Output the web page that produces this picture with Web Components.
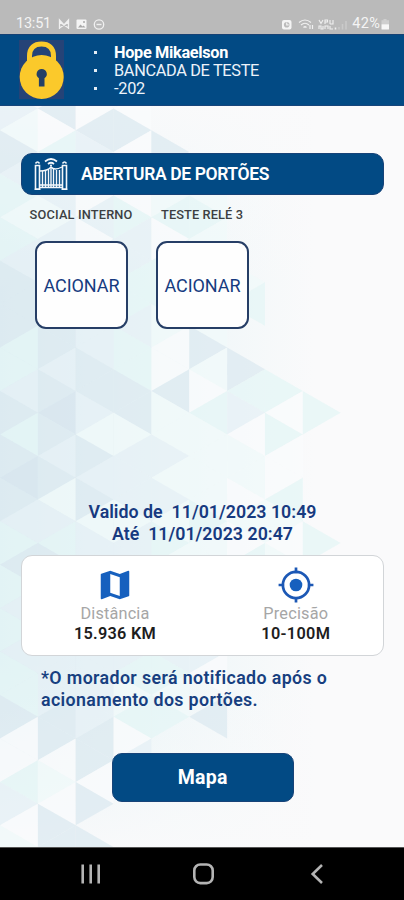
<!DOCTYPE html>
<html lang="pt-BR">
<head>
<meta charset="utf-8">
<title>Abertura de Portões</title>
<style>
html,body{margin:0;height:100%}
body{font-family:Roboto,"Liberation Sans",sans-serif;background:#fafafb}
</style>
</head>
<body>
<gate-app></gate-app>
<script>
function define(name, html, setup) {
  customElements.define(name, class extends HTMLElement {
    constructor() {
      super();
      this.attachShadow({ mode: 'open' }).innerHTML = html;
    }
    connectedCallback() { if (setup) setup(this.shadowRoot, this); }
  });
}

/* Sets the letter-spacing so that one line of text takes the width given in its "w" attribute. */
define('fit-text', `<style>:host{display:block;white-space:pre}span{display:inline-block}</style><span><slot></slot></span>`, (root, host) => {
  const span = root.querySelector('span');
  const want = Number(host.getAttribute('w'));
  const n = host.textContent.length;
  const space = (want - span.getBoundingClientRect().width) / n;
  span.style.letterSpacing = space.toFixed(3) + 'px';
  span.style.marginRight = (-space).toFixed(3) + 'px';
});

define('status-bar', `
<style>
:host{display:flex;box-sizing:border-box;height:34px;padding:16px 14px 0 16px;background:#bababa;color:#f4f4f4;justify-content:space-between;align-items:flex-start;font-size:14.5px;line-height:15px}
div{display:flex;align-items:center;height:15px}
svg{display:block}
</style>
<div><fit-text w="35">13:51</fit-text>
<svg width="54" height="14" viewBox="0 0 54 14" fill="none" stroke="#f0f0f0" stroke-width="1.6"><path d="M8.500 12V3l4.500 5L17.500 3v9M8.500 5l9 6M17.500 5l-9 6" stroke-width="1.300"/><rect x="25.500" y="2.500" width="10" height="9.500" rx="1" fill="#f4f4f4" stroke="none"/><path d="M27 10.500l2.500-3 2 2 1-1 2 2z" fill="#a8a8a8" stroke="none"/><circle cx="33" cy="5" r="1" fill="#aaa" stroke="none"/><circle cx="48" cy="7.500" r="4.700" stroke-width="1.300"/><path d="M45.500 7.500h5" stroke-width="1.400"/></svg></div>
<div><svg width="71" height="14" viewBox="0 0 71 14" fill="none" stroke="#f0f0f0" stroke-width="1.200"><rect x="1" y="3" width="9.500" height="9.500" rx="2" fill="#f4f4f4" stroke="none"/><circle cx="5.700" cy="7.700" r="2.800" fill="#bbb" stroke="none"/><path d="M5.700 5.500v2.400h2"/><path d="M18 5.500q6-5 12 0M20 8q4-3.500 8 0M22.500 10.500q1.500-1.500 3 0M29 8v4M31.500 8v4"/><path d="M38 3l2 3.500 2-3.500M44 7V3h2.500v2H44M49 3v4M52 3v4h-3M38 12V9h2v3h2V9M44 12V9h3v3M49 9v3h3" stroke-width="1.100"/><path d="M54.500 12.500v-2" stroke-width="1.500"/><path d="M58 12.500V10M61.500 12.500V7M65 12.500V4" stroke="#cacaca" stroke-width="1.500"/></svg>
<fit-text w="28">42%</fit-text>
<svg width="10" height="14" viewBox="0 0 10 14"><path d="M3.500 2h3v1.300H9v4H1.500v-4h2z" fill="#cfcfcf"/><path d="M1.500 7.300H9v4.700q0 .5-.5.500H2q-.5 0-.5-.5z" fill="#f7f7f7"/></svg></div>`);

define('user-header', `
<style>
:host{display:flex;box-sizing:border-box;height:72px;background:#024a84;color:#fff;border-top:1px solid #164174;border-bottom:1px solid #17457b;padding-left:18px}
svg{display:block;margin-top:5px}
ul{list-style:none;margin:9px 0 0 30px;padding:0;font-size:16.300px;line-height:18px}
li{display:flex;align-items:center;height:18px;gap:17px}
li::before{content:"";width:3px;height:3px;background:#e4edf5;margin-top:-2px}
li{color:#edf3fa}.b{color:#fff;font-weight:700}
</style>
<svg width="46" height="60" viewBox="0 0 46 60"><rect x="1" width="45" height="59" fill="#254377"/><path d="M11.500 25V16C11.500 7.500 16.500 4 23.500 4S35.500 7.500 35.500 16V25" fill="none" stroke="#fbc92b" stroke-width="5"/><circle cx="23.700" cy="37" r="22" fill="#fbc92b"/><path d="M23.700 29a5 5 0 0 1 2.800 9.200V46.500h-5.600v-8.300a5 5 0 0 1 2.800-9.200z" fill="#254066"/></svg>
<ul><li class="b"><fit-text w="114">Hope Mikaelson</fit-text></li><li><fit-text w="145">BANCADA DE TESTE</fit-text></li><li><fit-text w="31">-202</fit-text></li></ul>`);

/* Faceted backdrop: one string per 37.8px strip, one letter per triangle from top to bottom. */
define('facet-backdrop', `<style>:host{display:block}svg{display:block;width:100%;height:100%}</style>
<svg viewBox="0 106 404 741" preserveAspectRatio="none"><defs><linearGradient id="g"><stop offset="0" stop-color="#dcecf2"/><stop offset=".4" stop-color="#edf6f8"/><stop offset=".78" stop-color="#fafafb"/></linearGradient><linearGradient id="v" x2="0" y2="1"><stop offset="0" stop-color="#fafafb" stop-opacity=".9"/><stop offset=".25" stop-color="#fafafb" stop-opacity="0"/><stop offset=".75" stop-color="#fafafb" stop-opacity="0"/><stop offset="1" stop-color="#fafafb" stop-opacity=".9"/></linearGradient></defs><rect y="106" width="404" height="741" fill="url(#g)"/><rect y="106" width="404" height="741" fill="url(#v)"/><g></g></svg>`, root => {
  const shades = { w: '#fafbfc', n: '#f0f9fa', m: '#e4f5f5', l: '#e5f0f5', b: '#dce9f0', h: '#d7e4ee' };
  const strips = [
    'lnblmnmlbbbmmlbmbhblmbmlmlmmbwwmlwn',
    'bwmnlnllnlbblbhblbnlmblmllllbbwnwbb',
    'wblnwlwllmllbblnblbnllmlbllllbbwb.b',
    'wbw.wmllmmlmmbbnlllnllmnllmnmwl....',
    '..b.nmwmmmnwwbnnlnlnmnlnmlmnm......',
    '....nmnnwnnbnwmnnnnmnnmnwlw.b......',
    '........nm..bmlwnnwnwmnnl..........',
    '.............mwmwwmnwnmnw..........',
    '..............m.....m..............'
  ];
  const step = 21.72, top = 108.6, col = 37.85;
  let out = '';
  strips.forEach((rows, c) => [...rows].forEach((s, k) => {
    if (!shades[s]) return;
    const y = top + k * step, left = (c + k) % 2 === 1;
    const a = left ? c * col : (c + 1) * col, b = left ? (c + 1) * col : c * col;
    out += `<path d="M${a} ${y}L${b} ${y - step}V${y + step}z" fill="${shades[s]}" opacity=".75"/>`;
  }));
  root.querySelector('g').innerHTML = out;
});

define('section-title', `
<style>:host{display:flex;box-sizing:border-box;height:42px;background:#024a84;border:1px solid #174378;border-radius:11px;color:#fff;font-weight:600;font-size:17.500px;align-items:center;padding-left:11px;gap:12px}svg{display:block}</style>
<svg width="36" height="36" viewBox="0 0 36 36" fill="none" stroke="#f3f7fb"><path d="M12 5.500q6-5 12 0M15 8q3-2.500 6 0" stroke-width="1.700"/><circle cx="18" cy="9.500" r="1" fill="#fff" stroke="none"/><path d="M2.500 33V9.500h4V33zM29.500 33V9.500h4V33zM2.500 7.500q2-3 4 0M29.500 7.500q2-3 4 0M1.500 33.200h6M28.500 33.200h6" stroke-width="1.600"/><path d="M7 15q7.500 0 11-4 3.500 4 11 0M7 29h22M7 31.500h22" stroke-width="1.400"/><path d="M9.500 15v16M12.500 14v17M15.500 13v18M18 11.500v20M20.500 13v18M23.500 14v17M26.500 14v17" stroke-width="1.400"/></svg>
<slot></slot>`);

define('gate-control', `
<style>:host{display:flex;flex-direction:column;align-items:center;width:121px}
.name{font-size:12.800px;line-height:16px;height:16px;color:#3c3f42;font-weight:500;margin-left:-1px}
button{display:flex;align-items:center;justify-content:center;box-sizing:border-box;margin:18px 0 0;padding:0;width:93px;height:88px;border:2px solid #263e66;border-radius:11px;background:#fefefe;color:#163b80;font:400 18px Roboto,"Liberation Sans",sans-serif}
</style><div class="name"><slot></slot></div><button><fit-text w="76">ACIONAR</fit-text></button>`);

define('info-card', `<style>:host{display:flex;box-sizing:border-box;height:101px;border:1.500px solid #d2d5d8;border-radius:11px;background:#fff;justify-content:space-between;padding:10px 53px 0 52px}</style><slot></slot>`);
define('info-metric', `
<style>:host{display:flex;flex-direction:column;align-items:center}
slot{display:block}.icon{height:38px}.label{color:#a6a6a6;font-size:16.300px;line-height:20px}.value{color:#1d1d1d;font-size:16.300px;line-height:20px;font-weight:600}</style>
<slot name="icon" class="icon"></slot><slot name="label" class="label"></slot><slot name="value" class="value"></slot>`);

define('nav-bar', `<style>:host{display:flex;box-sizing:border-box;height:53px;border-top:1px solid #555;background:#000;justify-content:space-between;align-items:center;padding:0 75px 0 77px}svg{display:block}</style>
<svg width="28" height="24" viewBox="0 0 28 24" stroke="#b4b4b4" stroke-width="2.600"><path d="M5.700 2.500v19M13.700 2.500v19M21.700 2.500v19"/></svg>
<svg width="24" height="24" viewBox="0 0 24 24" fill="none" stroke="#b4b4b4" stroke-width="2.600"><rect x="1.300" y="2.500" width="18.400" height="18.600" rx="6"/></svg>
<svg width="24" height="24" viewBox="0 0 24 24" fill="none" stroke="#b4b4b4" stroke-width="2.600"><path d="M17 3L7.700 12l9.300 9"/></svg>`);

define('gate-app', `
<style>
:host{display:flex;flex-direction:column;height:900px;width:404px;overflow:hidden}
main{display:grid;height:741px;grid-template:741px / 404px}
facet-backdrop,.content{grid-area:1/1}
.content{display:flex;flex-direction:column;padding:47px 20px 0 21px;position:relative}
.gates{display:flex;margin-top:12px}
.valid{display:flex;flex-direction:column;align-items:center;margin-top:172px;color:#173a80;font-weight:600;font-size:17.800px;line-height:21.500px}
info-card{margin-top:11px}
.note{margin:11px 0 0 20px;color:#173f80;font-weight:600;font-size:17.800px;line-height:21.500px}
.map{display:block;align-self:center;margin-top:43px;width:182px;height:49px;padding:0;border:1px solid #174378;border-radius:10px;background:#024a84;color:#fff;font:700 19.500px Roboto,"Liberation Sans",sans-serif}
.map fit-text{display:flex;justify-content:center}
svg{display:block}
</style>
<status-bar></status-bar><user-header></user-header>
<main><facet-backdrop></facet-backdrop><div class="content">
<section-title><fit-text w="188">ABERTURA DE PORTÕES</fit-text></section-title>
<div class="gates"><gate-control><fit-text w="103">SOCIAL INTERNO</fit-text></gate-control><gate-control><fit-text w="82">TESTE RELÉ 3</fit-text></gate-control></div>
<div class="valid"><fit-text w="228">Valido de  11/01/2023 10:49</fit-text><fit-text w="181">Até  11/01/2023 20:47</fit-text></div>
<info-card>
<info-metric><svg slot="icon" width="38" height="38" viewBox="0 0 24 24" fill="#1660be"><path d="M20.500 3l-.16.030L15 5.100 9 3 3.360 4.900c-.21.070-.36.250-.36.480V20.500c0 .28.220.5.500.5l.16-.030L9 18.900l6 2.100 5.640-1.900c.21-.070.360-.250.360-.480V3.500c0-.28-.22-.5-.5-.5zM15 19l-6-2.110V5l6 2.110V19z"/></svg><fit-text slot="label" w="69">Distância</fit-text><fit-text slot="value" w="82">15.936 KM</fit-text></info-metric>
<info-metric><svg slot="icon" width="38" height="38" viewBox="0 0 24 24" fill="none" stroke="#1c58b5" stroke-width="1.700"><circle cx="12" cy="12" r="8.300"/><path d="M12 1v3.500M12 19.500V23M1 12h3.500M19.500 12H23"/><circle cx="12" cy="12" r="4" fill="#1660be" stroke="none"/></svg><fit-text slot="label" w="65">Precisão</fit-text><fit-text slot="value" w="69">10-100M</fit-text></info-metric>
</info-card>
<div class="note"><fit-text w="286">*O morador será notificado após o</fit-text><fit-text w="217">acionamento dos portões.</fit-text></div>
<button class="map"><fit-text w="50">Mapa</fit-text></button>
</div></main><nav-bar></nav-bar>`);
</script>
</body>
</html>
